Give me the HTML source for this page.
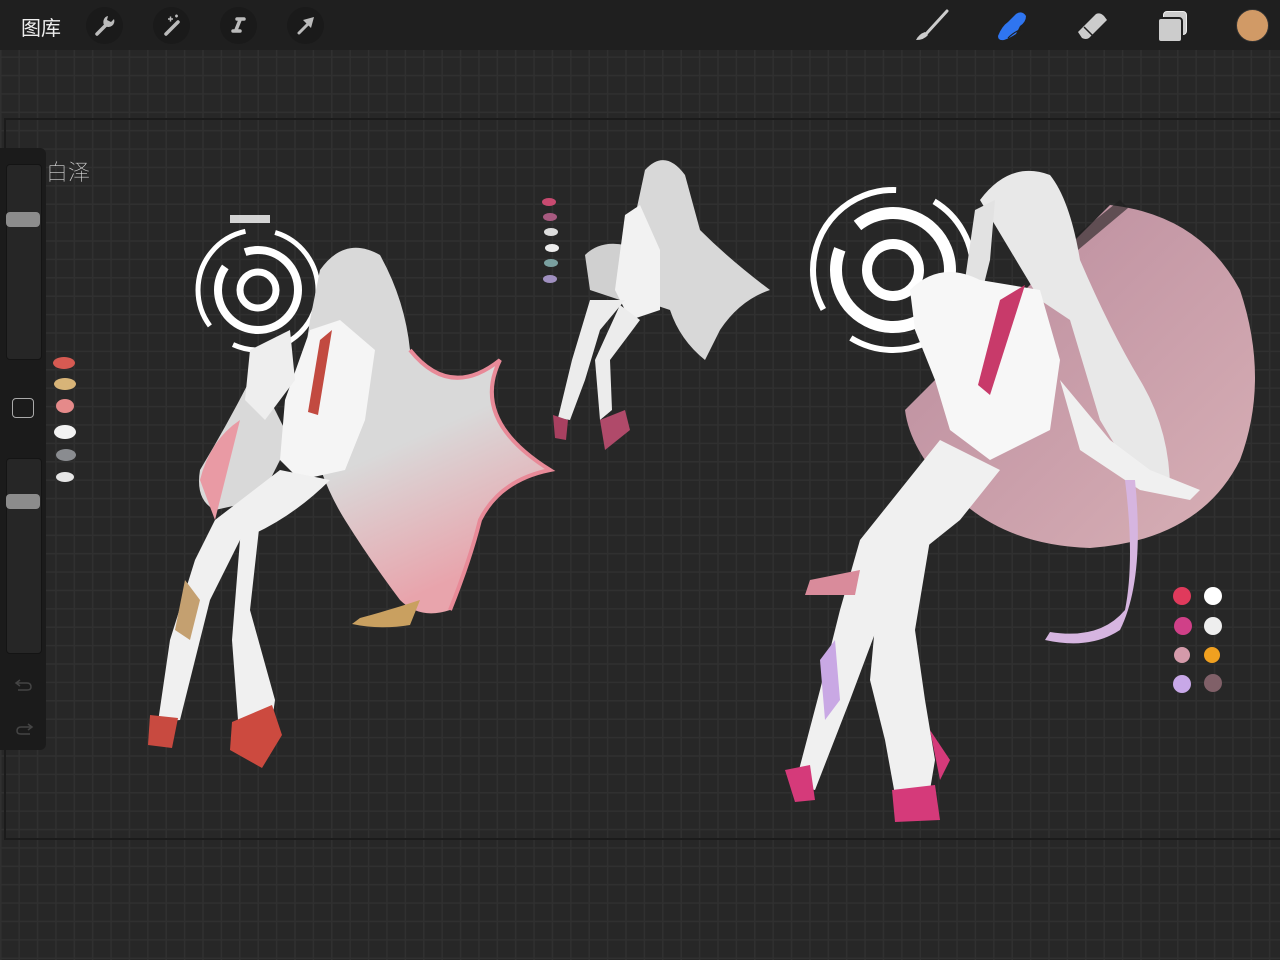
<!DOCTYPE html>
<html><head><meta charset="utf-8"><style>
html,body{margin:0;padding:0;width:1280px;height:960px;overflow:hidden;background:#262626;font-family:"Liberation Sans","Noto Sans CJK SC",sans-serif}
#grid{position:absolute;left:0;top:50px;width:1280px;height:910px;background-color:#272727;
background-image:linear-gradient(#303030 1.5px,transparent 1.5px),linear-gradient(90deg,#303030 1.5px,transparent 1.5px);
background-size:18.4px 18.4px;background-position:0 -12px}
#frame{position:absolute;left:4px;top:118px;width:1290px;height:718px;border:2px solid #1b1b1b}
#top{position:absolute;left:0;top:0;width:1280px;height:50px;background:#1f1f1f}
.lab{position:absolute;left:21px;top:12px;color:#eee;font-size:20px}
.cb{position:absolute;top:7px;width:37px;height:37px;border-radius:50%;background:#1a1a1a}
.cb svg{position:absolute;left:0;top:0}
#side{position:absolute;left:0;top:148px;width:46px;height:602px;background:#1b1b1b;border-radius:0 6px 6px 0}
.sl{position:absolute;left:6px;width:34px;background:#262626;border-radius:4px;border:1px solid #141414}
.kn{position:absolute;left:6px;width:34px;height:15px;background:#8c8c8c;border-radius:4px}
</style></head><body>
<div id="grid"></div>
<div id="frame"></div>

<svg style="position:absolute;left:0;top:0" width="1280" height="960">
 <defs>
  <linearGradient id="hp" x1="0" y1="0" x2="0.3" y2="1"><stop offset="0.6" stop-color="#d9d9d9"/><stop offset="1" stop-color="#e8a4ac"/></linearGradient>
  <linearGradient id="pc" x1="0" y1="0" x2="1" y2="1"><stop offset="0" stop-color="#b98a9c"/><stop offset="1" stop-color="#d8b0b6"/></linearGradient>
 </defs>
 <text x="46" y="180" fill="#d8d8d8" font-size="22" font-family="Noto Sans CJK SC" font-weight="100">白泽</text>
 <g><ellipse cx="64" cy="363" rx="11" ry="6" fill="#d65a52"/><ellipse cx="65" cy="384" rx="11" ry="6" fill="#d8b478"/><ellipse cx="65" cy="406" rx="9" ry="7" fill="#e58a8a"/><ellipse cx="65" cy="432" rx="11" ry="7" fill="#f2f2f2"/><ellipse cx="66" cy="455" rx="10" ry="6" fill="#8a8c90"/><ellipse cx="65" cy="477" rx="9" ry="5" fill="#e6e6e6"/></g>

 <g fill="none" stroke="#fff">
  <circle cx="258" cy="290" r="60" stroke-width="5" stroke-dasharray="120 30"/>
  <circle cx="258" cy="290" r="40" stroke-width="8" stroke-dasharray="150 25"/>
  <circle cx="258" cy="290" r="18" stroke-width="7"/>
 </g>
 <path d="M230 215 h40 v8 h-40z" fill="#fff" opacity=".8"/>
 <path d="M320 270 Q345 235 380 255 Q405 300 410 350 Q450 400 500 360 Q470 420 550 470 Q500 480 480 520 Q470 560 450 610 Q420 620 400 600 Q370 560 345 520 Q320 480 310 430 Q300 380 310 320 Z" fill="url(#hp)"/>
 <path d="M410 350 Q450 400 500 360 Q470 420 550 470 Q500 480 480 520 Q470 560 450 610" fill="none" stroke="#e88a98" stroke-width="4"/>
 <path d="M255 370 Q230 420 200 470 Q195 500 215 510 L260 500 L290 440 Z" fill="#d9d9d9"/>
 <path d="M200 480 Q210 440 240 420 L215 520 Z" fill="#e99aa4"/>
 <path d="M310 330 L340 320 L375 350 L365 420 L345 470 L300 480 L280 460 L285 400 Z" fill="#f5f5f5"/>
 <path d="M320 340 L332 330 L318 415 L308 412 Z" fill="#c24a40"/>
 <path d="M250 350 L290 330 L295 380 L265 420 L245 400 Z" fill="#eeeeee"/>
 <path d="M280 470 L330 480 Q290 520 240 540 L210 600 L180 720 L158 722 L170 640 L195 560 L215 520 Z" fill="#f0f0f0"/>
 <path d="M240 540 L260 520 L250 610 L275 700 L270 735 L238 720 L232 640 Z" fill="#f0f0f0"/>
 <path d="M185 580 L200 600 L190 640 L175 630 Z" fill="#c4a070"/>
 <path d="M150 715 L178 718 L172 748 L148 745 Z" fill="#c84a40"/>
 <path d="M232 722 L272 705 L282 735 L262 768 L230 750 Z" fill="#cc4a3f"/>
 <path d="M360 618 Q390 610 420 600 L410 625 Q380 630 352 624 Z" fill="#c9a060"/>

 <g><ellipse cx="549" cy="202" rx="7" ry="4" fill="#c84a70"/><ellipse cx="550" cy="217" rx="7" ry="4" fill="#a85a80"/><ellipse cx="551" cy="232" rx="7" ry="4" fill="#ddd"/><ellipse cx="552" cy="248" rx="7" ry="4" fill="#eee"/><ellipse cx="551" cy="263" rx="7" ry="4" fill="#7aa0a0"/><ellipse cx="550" cy="279" rx="7" ry="4" fill="#a090c0"/></g>
 <path d="M645 170 Q665 148 685 175 L700 230 Q730 260 770 290 Q740 300 720 330 L705 360 Q680 340 670 310 L640 300 L630 240 Z" fill="#d8d8d8"/>
 <path d="M585 255 Q600 240 625 245 L640 290 L620 300 L590 290 Z" fill="#d0d0d0"/>
 <path d="M625 215 L640 205 L660 250 L660 310 L630 320 L615 290 Z" fill="#f2f2f2"/>
 <path d="M590 300 L625 300 L600 330 L585 380 L570 420 L558 418 L572 360 Z" fill="#ececec"/>
 <path d="M620 305 L640 320 L610 360 L612 410 L600 420 L595 360 Z" fill="#ececec"/>
 <path d="M600 420 L625 410 L630 430 L605 450 Z" fill="#b04a6a"/><path d="M553 415 L568 420 L566 440 L555 438 Z" fill="#a84060"/>

 <path d="M905 410 L1110 205 Q1200 215 1240 290 Q1270 380 1240 460 Q1200 540 1090 548 Q1000 545 950 490 Q910 450 905 410 Z" fill="url(#pc)"/>
 <path d="M1070 240 L1120 200 L1128 208 L1078 250 Z" fill="#1e1e1e" opacity=".6"/>
 <g fill="none" stroke="#fff">
  <circle cx="893" cy="270" r="80" stroke-width="6" stroke-dasharray="170 40"/>
  <circle cx="893" cy="270" r="57" stroke-width="12" stroke-dasharray="200 30"/>
  <circle cx="893" cy="270" r="26" stroke-width="10"/>
 </g>
 <path d="M980 200 Q1010 160 1050 175 Q1070 200 1080 260 Q1110 330 1140 380 Q1170 430 1170 490 L1130 470 L1100 420 L1070 320 L1040 300 Z" fill="#e8e8e8"/>
 <path d="M975 210 L995 200 L990 260 L980 300 L965 280 Z" fill="#e2e2e2"/>
 <path d="M910 290 Q940 260 980 280 L1040 290 L1060 360 L1050 430 L990 460 L950 430 L935 380 L915 330 Z" fill="#f7f7f7"/>
 <path d="M1060 380 L1110 440 L1150 470 L1200 490 L1190 500 L1140 490 L1080 450 Z" fill="#f0f0f0"/>
 <path d="M1000 300 L1025 285 L990 395 L978 385 Z" fill="#c83a6a"/>
 <path d="M940 440 L1000 470 L960 520 L910 560 L880 620 L850 700 L815 790 L795 785 L820 690 L840 610 L860 540 Z" fill="#f0f0f0"/>
 <path d="M880 570 L930 540 L915 630 L925 700 L935 760 L930 790 L895 795 L885 740 L870 680 Z" fill="#f0f0f0"/>
 <path d="M810 580 L860 570 L855 595 L805 595 Z" fill="#d98b9b"/>
 <path d="M820 660 L835 640 L840 700 L825 720 Z" fill="#c9a8e4"/>
 <path d="M785 770 L810 765 L815 800 L795 802 Z" fill="#d53a7a"/><path d="M892 790 L935 785 L940 820 L895 822 Z" fill="#d53a7a"/>
 <path d="M930 730 L950 760 L940 780 Z" fill="#d53a7a"/>
 <path d="M1135 480 Q1145 580 1120 630 Q1090 650 1045 640 L1050 632 Q1100 640 1125 610 Q1135 560 1125 480 Z" fill="#d6b5e0"/>
 <g><circle cx="1182" cy="596" r="9" fill="#e03a5c"/><circle cx="1213" cy="596" r="9" fill="#fff"/><circle cx="1183" cy="626" r="9" fill="#d04088"/><circle cx="1213" cy="626" r="9" fill="#eee"/><circle cx="1182" cy="655" r="8" fill="#d49aaa"/><circle cx="1212" cy="655" r="8" fill="#f0a020"/><circle cx="1182" cy="684" r="9" fill="#c8a8e8"/><circle cx="1213" cy="683" r="9" fill="#806068"/></g>
</svg>

<div id="top">
 <div class="lab">图库</div>
 <div class="cb" style="left:86px"><svg width="37" height="37"><path d="M11 27 L20 18" stroke="#bbb" stroke-width="3.5" stroke-linecap="round"/><path d="M19 19 A6 6 0 0 1 22 9 L21 13 L25 15 L28 12 A6 6 0 0 1 19 19Z" fill="#bbb"/></svg></div>
 <div class="cb" style="left:153px"><svg width="37" height="37"><path d="M13 27 L25 15" stroke="#bbb" stroke-width="3.5" stroke-linecap="round"/><path d="M15 12h5M17.5 9.5v5M22 9h3M23.5 7.5v3" stroke="#bbb" stroke-width="1.5"/></svg></div>
 <div class="cb" style="left:220px"><svg width="37" height="37"><path d="M17 12 H24 M20 13 L16 23 M13 24 H20" stroke="#bbb" stroke-width="3.5" fill="none" stroke-linecap="round"/></svg></div>
 <div class="cb" style="left:287px"><svg width="37" height="37"><path d="M12 26 L22 16" stroke="#bbb" stroke-width="3" stroke-linecap="round"/><path d="M16 13 L27 10 L24 21 Z" fill="#bbb"/></svg></div>
 <svg style="position:absolute;left:910px;top:8px" width="40" height="34"><path d="M37 3 L16 26" stroke="#ccc" stroke-width="3" stroke-linecap="round"/><path d="M15 24 Q9 26 6 32 Q14 32 18 27 Z" fill="#ccc"/></svg>
 <svg style="position:absolute;left:994px;top:8px" width="34" height="34"><path d="M4 28 Q8 18 14 14 L22 6 Q28 2 32 8 Q32 14 26 18 L22 26 Q16 30 10 32 Q4 33 4 28 Z" fill="#2f75f0"/><path d="M14 30 Q20 24 26 22" stroke="#1f1f1f" stroke-width="1.2" fill="none"/></svg>
 <svg style="position:absolute;left:1074px;top:10px" width="36" height="32"><path d="M4 22 L22 4 Q26 2 30 6 L33 10 L15 28 Q12 30 8 28 Z" fill="#ccc"/><path d="M10 17 L19 26" stroke="#1f1f1f" stroke-width="1.5"/></svg>
 <div style="position:absolute;left:1163px;top:11px;width:22px;height:22px;background:#ccc;border:1px solid #eee;border-radius:4px"></div>
 <div style="position:absolute;left:1157px;top:17px;width:22px;height:22px;background:#ccc;border:2px solid #1f1f1f;border-radius:4px"></div>
 <div style="position:absolute;left:1236px;top:9px;width:31px;height:31px;border-radius:50%;background:#d19a66;border:1px solid #333"></div>
</div>

<div id="side">
 <div class="sl" style="top:16px;height:194px"></div>
 <div class="kn" style="top:64px"></div>
 <div style="position:absolute;left:12px;top:250px;width:20px;height:18px;border:1.5px solid #aaa;border-radius:4px"></div>
 <div class="sl" style="top:310px;height:194px"></div>
 <div class="kn" style="top:346px"></div>
 <svg style="position:absolute;left:12px;top:522px" width="24" height="70"><path d="M8 10 L4 13 L8 16 M4 13 H15 Q19 13 19 17 Q19 20 15 20 H6" stroke="#444" stroke-width="1.5" fill="none"/><path d="M16 54 L20 57 L16 60 M20 57 H9 Q5 57 5 61 Q5 64 9 64 H18" stroke="#444" stroke-width="1.5" fill="none"/></svg>
</div>
</body></html>
